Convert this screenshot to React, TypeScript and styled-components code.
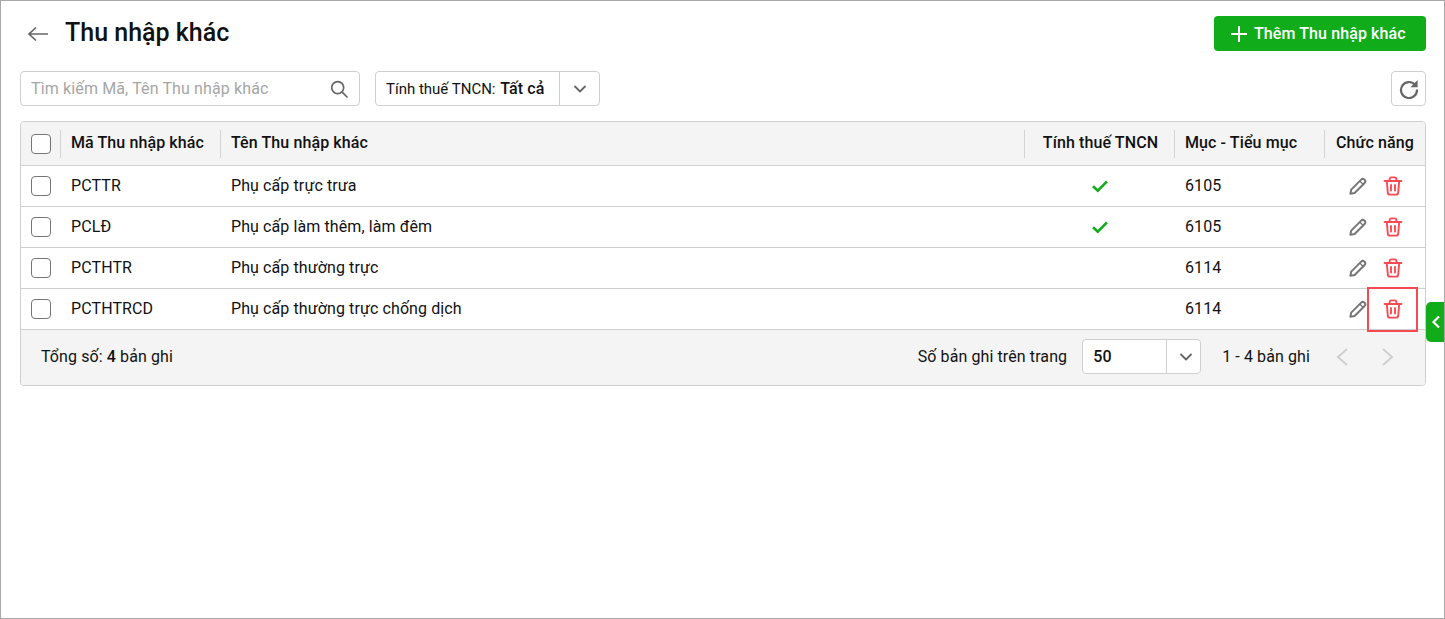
import React from "react";
import styled, { createGlobalStyle } from "styled-components";

const Global = createGlobalStyle`
  html, body { margin: 0; padding: 0; background: #fff; }
  body { font-family: Roboto, "Noto Sans", sans-serif; font-size: 16px; letter-spacing: 0.1px; color: #111; }
  * { box-sizing: border-box; }
`;

const Frame = styled.div`
  position: relative;
  width: 1445px;
  height: 619px;
  border: 1px solid #a8a8a8;
  padding: 15px 18px 0 19px;
  overflow: hidden;
`;
const TitleBar = styled.div`
  display: flex;
  align-items: center;
  justify-content: space-between;
  height: 35px;
`;
const TitleGroup = styled.div`
  display: flex;
  align-items: center;
  gap: 9px;
  padding-bottom: 2px;
`;
const BackButton = styled.span`
  display: flex;
  width: 36px;
  height: 30px;
  align-items: center;
  justify-content: center;
  margin-top: 2px;
`;
const Title = styled.h1`
  margin: 0;
  font-size: 25px;
  font-weight: 500;
  letter-spacing: 0;
  line-height: 32px;
  color: #111;
`;
const AddButton = styled.button`
  display: flex;
  align-items: center;
  gap: 6px;
  width: 212px;
  height: 35px;
  padding: 0 0 0 16px;
  border: 0;
  border-radius: 4px;
  background: #10ac1a;
  color: #fff;
  font: 500 16px Roboto, sans-serif;
  letter-spacing: 0.1px;
`;
const Toolbar = styled.div`
  display: flex;
  align-items: center;
  gap: 15px;
  height: 35px;
  margin-top: 20px;
`;
const SearchBox = styled.div`
  display: flex;
  align-items: center;
  justify-content: space-between;
  width: 340px;
  height: 35px;
  padding: 0 11px 0 10px;
  border: 1px solid #cfcfcf;
  border-radius: 4px;
`;
const Placeholder = styled.span`
  color: #a6a6a6;
  letter-spacing: 0.13px;
`;
const SplitSelect = styled.div<{ $w: number }>`
  display: flex;
  flex: none;
  width: ${(p) => p.$w}px;
  height: 35px;
  border: 1px solid #cfcfcf;
  border-radius: 4px;
  background: #fff;
`;
const SelectValue = styled.div`
  flex: 1;
  display: flex;
  align-items: center;
  padding-left: 10px;
  white-space: pre;
`;
const SmallLabel = styled.span`
  font-size: 15px;
  letter-spacing: 0;
  margin-right: 1px;
`;
const Strong = styled.b`
  font-weight: 500;
`;
const SelectArrow = styled.div<{ $w: number; $shift?: number }>`
  width: ${(p) => p.$w}px;
  padding-left: ${(p) => p.$shift ?? 0}px;
  display: flex;
  align-items: center;
  justify-content: center;
  border-left: 1px solid #cfcfcf;
`;
const Spacer = styled.div`
  flex: 1;
`;
const RefreshButton = styled.div`
  display: flex;
  width: 35px;
  height: 35px;
  align-items: center;
  justify-content: center;
  border: 1px solid #cfcfcf;
  border-radius: 4px;
`;
const Table = styled.div`
  width: 1406px;
  margin-top: 15px;
  border: 1px solid #cfcfcf;
  border-radius: 4px;
  overflow: hidden;
`;
const columns = "39px 160px 804px 150px 150px 101px";
const HeadRow = styled.div`
  display: grid;
  grid-template-columns: ${columns};
  height: 44px;
  background: #f4f4f4;
  border-bottom: 1px solid #cfcfcf;
  align-items: center;
`;
const HeadCell = styled.div<{ $center?: boolean; $shift?: number }>`
  height: 28px;
  line-height: 26px;
  padding-left: ${(p) => (p.$center ? p.$shift ?? 0 : 10)}px;
  text-align: ${(p) => (p.$center ? "center" : "left")};
  border-left: 1px solid #d4d4d4;
  font-weight: 500;
  white-space: nowrap;
`;
const CheckCell = styled.div`
  display: flex;
  align-items: center;
  padding-left: 10px;
`;
const Check = styled.span`
  display: block;
  width: 20px;
  height: 20px;
  border: 1px solid #757575;
  border-radius: 4px;
  background: #fff;
`;
const Row = styled.div`
  display: grid;
  grid-template-columns: ${columns};
  height: 41px;
  align-items: center;
  border-bottom: 1px solid #cfcfcf;
  background: #fff;
`;
const Cell = styled.div`
  padding-left: 11px;
  padding-bottom: 2px;
  white-space: nowrap;
`;
const TickCell = styled.div`
  display: flex;
  justify-content: center;
  padding-left: 2px;
`;
const Actions = styled.div`
  display: flex;
  align-items: center;
  gap: 15px;
  padding-left: 24px;
`;
const IconSlot = styled.span`
  display: flex;
  width: 20px;
  height: 20px;
  align-items: center;
  justify-content: center;
`;
const Footer = styled.div`
  display: flex;
  align-items: center;
  height: 55px;
  padding: 0 28px 2px 20px;
  background: #f4f4f4;
`;
const Bold = styled.b`
  font-weight: 500;
`;
const PageLabel = styled.span`
  margin-right: 15px;
`;
const Range = styled.span`
  margin: 0 23px 0 21px;
`;
const Pager = styled.div`
  display: flex;
  gap: 24px;
  align-items: center;
`;
const SideTab = styled.div`
  position: absolute;
  left: 1425px;
  top: 301px;
  width: 19px;
  height: 40px;
  display: flex;
  align-items: center;
  justify-content: center;
  border-radius: 5px 0 0 5px;
  background: #10ac1a;
`;
const Highlight = styled.div`
  position: absolute;
  left: 1366px;
  top: 286px;
  width: 51px;
  height: 45px;
  border: 2px solid #f44a50;
  pointer-events: none;
`;

const Chevron = () => (
  <svg width="16" height="16" viewBox="0 0 16 16" fill="none" stroke="#666" strokeWidth="1.8" strokeLinecap="round" strokeLinejoin="round">
    <path d="M3 5.5 8 10.5 13 5.5" />
  </svg>
);
const Pencil = () => (
  <svg width="20" height="20" viewBox="0 0 20 20" fill="none" stroke="#777" strokeWidth="2" strokeLinejoin="round">
    <path d="M2.4 17.8 3.2 13.6 13.2 3.6a2.3 2.3 0 0 1 3.2 0l.2.2a2.3 2.3 0 0 1 0 3.2L6.6 17z" />
    <path d="M11.8 5 15.2 8.4" strokeWidth="1.4" />
  </svg>
);
const Trash = () => (
  <svg width="20" height="20" viewBox="0 0 20 20" fill="none" stroke="#fb4a52" strokeWidth="1.9" strokeLinecap="round" strokeLinejoin="round">
    <path d="M1.6 5h16.8" />
    <path d="M6.6 5V3.2c0-1 .8-1.8 1.8-1.8h3.2c1 0 1.8.8 1.8 1.8V5" />
    <path d="M3.8 5l1 11.6c.1 1.1 1 2 2.1 2h6.2c1.1 0 2-.9 2.1-2L16.2 5" />
    <path d="M8 9v5.6M12 9v5.6" />
  </svg>
);
const Tick = () => (
  <svg width="16" height="14" viewBox="0 0 16 14" fill="none" stroke="#10ac1a" strokeWidth="2.6">
    <path d="M1 7.2 5.8 11.6 15 2.4" />
  </svg>
);

const rows = [
  { code: "PCTTR", name: "Phụ cấp trực trưa", tax: true, item: "6105" },
  { code: "PCLĐ", name: "Phụ cấp làm thêm, làm đêm", tax: true, item: "6105" },
  { code: "PCTHTR", name: "Phụ cấp thường trực", tax: false, item: "6114" },
  { code: "PCTHTRCD", name: "Phụ cấp thường trực chống dịch", tax: false, item: "6114" },
];

export default function App() {
  return (
    <Frame>
      <Global />
      <TitleBar>
        <TitleGroup>
          <BackButton>
            <svg width="22" height="16" viewBox="0 0 22 16" fill="none" stroke="#666" strokeWidth="1.7">
              <path d="M21 8H2M9 1.5 2 8l7 6.5" />
            </svg>
          </BackButton>
          <Title>Thu nhập khác</Title>
        </TitleGroup>
        <AddButton>
          <svg width="18" height="18" viewBox="0 0 18 18" stroke="#fff" strokeWidth="2">
            <path d="M9 1v16M1 9h16" />
          </svg>
          Thêm Thu nhập khác
        </AddButton>
      </TitleBar>
      <Toolbar>
        <SearchBox>
          <Placeholder>Tìm kiếm Mã, Tên Thu nhập khác</Placeholder>
          <svg width="18" height="18" viewBox="0 0 18 18" fill="none" stroke="#666" strokeWidth="1.7" strokeLinecap="round">
            <circle cx="7.7" cy="7.7" r="6" />
            <path d="M12.2 12.2 17 17" />
          </svg>
        </SearchBox>
        <SplitSelect $w={225}>
          <SelectValue>
            <SmallLabel>Tính thuế TNCN: </SmallLabel>
            <Strong>Tất cả</Strong>
          </SelectValue>
          <SelectArrow $w={40}>
            <Chevron />
          </SelectArrow>
        </SplitSelect>
        <Spacer />
        <RefreshButton>
          <svg width="20" height="20" viewBox="0 0 20 20" fill="none" stroke="#666" strokeWidth="2.2">
            <path d="M16.4 6.2A8 8 0 1 0 18 10.5" />
            <path d="M18.6 1v7.2h-7.2z" fill="#666" stroke="none" />
          </svg>
        </RefreshButton>
      </Toolbar>
      <Table>
        <HeadRow>
          <CheckCell>
            <Check />
          </CheckCell>
          <HeadCell>Mã Thu nhập khác</HeadCell>
          <HeadCell>Tên Thu nhập khác</HeadCell>
          <HeadCell $center $shift={2}>Tính thuế TNCN</HeadCell>
          <HeadCell>Mục - Tiểu mục</HeadCell>
          <HeadCell $center>Chức năng</HeadCell>
        </HeadRow>
        {rows.map((r) => (
          <Row key={r.code}>
            <CheckCell>
              <Check />
            </CheckCell>
            <Cell>{r.code}</Cell>
            <Cell>{r.name}</Cell>
            <TickCell>{r.tax && <Tick />}</TickCell>
            <Cell>{r.item}</Cell>
            <Actions>
              <IconSlot>
                <Pencil />
              </IconSlot>
              <IconSlot>
                <Trash />
              </IconSlot>
            </Actions>
          </Row>
        ))}
        <Footer>
          <span>
            Tổng số: <Bold>4</Bold> bản ghi
          </span>
          <Spacer />
          <PageLabel>Số bản ghi trên trang</PageLabel>
          <SplitSelect $w={119}>
            <SelectValue>
              <Strong>50</Strong>
            </SelectValue>
            <SelectArrow $w={34} $shift={4}>
              <Chevron />
            </SelectArrow>
          </SplitSelect>
          <Range>1 - 4 bản ghi</Range>
          <Pager>
            <svg width="20" height="20" viewBox="0 0 20 20" fill="none" stroke="#cfcfcf" strokeWidth="2">
              <path d="M14 2 5 10l9 8" />
            </svg>
            <svg width="20" height="20" viewBox="0 0 20 20" fill="none" stroke="#cfcfcf" strokeWidth="2">
              <path d="M6 2l9 8-9 8" />
            </svg>
          </Pager>
        </Footer>
      </Table>
      <Highlight />
      <SideTab>
        <svg width="10" height="14" viewBox="0 0 10 14" fill="none" stroke="#fff" strokeWidth="2.2">
          <path d="M8 1.5 2.5 7 8 12.5" />
        </svg>
      </SideTab>
    </Frame>
  );
}
